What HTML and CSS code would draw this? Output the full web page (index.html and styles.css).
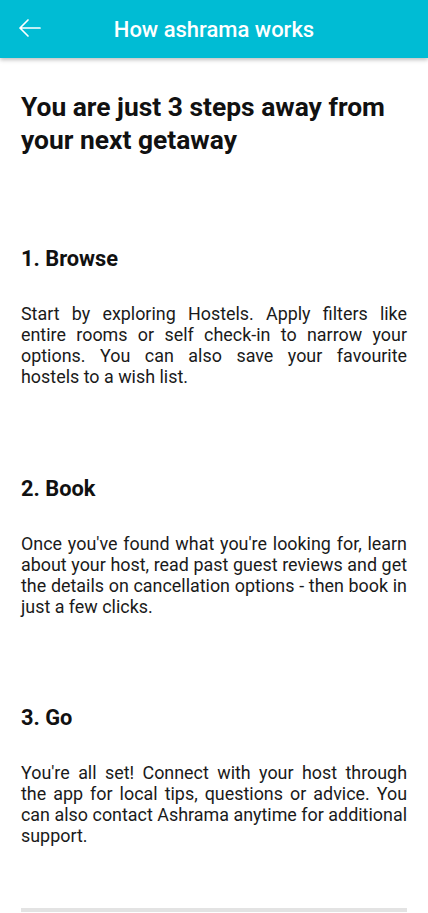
FILE: index.html
```html
<!DOCTYPE html>
<html>
<head>
<meta charset="utf-8">
<link rel="stylesheet" href="styles.css">
</head>
<body>
<header class="appbar">
  <button class="back" aria-label="Back">
    <svg width="24" height="24" viewBox="0 0 24 24"><path d="M23 12H3M11 4l-8 8 8 8" fill="none" stroke="#fff" stroke-width="1.7" stroke-linecap="round" stroke-linejoin="round"/></svg>
  </button>
  <h2 class="title">How ashrama works</h2>
</header>
<main class="content">
  <h1 class="headline">You are just 3 steps away from your next getaway</h1>
  <section class="step step-first">
    <h3 class="step-title">1. Browse</h3>
    <p class="step-text">Start by exploring Hostels. Apply filters like entire rooms or self check-in to narrow your options. You can also save your favourite hostels to a wish list.</p>
  </section>
  <section class="step">
    <h3 class="step-title">2. Book</h3>
    <p class="step-text">Once you've found what you're looking for, learn about your host, read past guest reviews and get the details on cancellation options - then book in just a few clicks.</p>
  </section>
  <section class="step">
    <h3 class="step-title">3. Go</h3>
    <p class="step-text">You're all set! Connect with your host through the app for local tips, questions or advice. You can also contact Ashrama anytime for additional support.</p>
  </section>
  <hr class="divider">
</main>
</body>
</html>
```
FILE: styles.css
```css
* { box-sizing: border-box; }
html, body { margin: 0; padding: 0; background: #fff; }
body {
  font-family: Roboto, "Liberation Sans", sans-serif;
  color: #111;
  width: 428px;
  height: 913px;
  overflow: hidden;
}
.appbar {
  height: 58px;
  background: #00bcd4;
  display: flex;
  align-items: center;
  position: relative;
  box-shadow: 0 2px 4px rgba(0,0,0,0.25);
  z-index: 2;
}
.back {
  position: absolute;
  left: 17px;
  top: 16px;
  width: 24px;
  height: 24px;
  padding: 0;
  border: 0;
  background: none;
  display: flex;
}
.title {
  flex: 1;
  margin: 0;
  text-align: center;
  color: #fff;
  font-size: 22px;
  font-weight: 500;
}
.content {
  padding: 33px 21px 0 21px;
  display: flex;
  flex-direction: column;
}
.headline {
  margin: 0;
  font-size: 26.4px;
  line-height: 33px;
  font-weight: 700;
  color: #111;
}
.step {
  margin-top: 89.5px;
  display: flex;
  flex-direction: column;
  gap: 32px;
}
.step-first {
  margin-top: 90px;
}
.step-title {
  margin: 0;
  font-size: 21.8px;
  line-height: 24px;
  font-weight: 700;
}
.step-text {
  margin: 0;
  font-size: 17.9px;
  line-height: 21px;
  text-align: justify;
  color: #1a1a1a;
}
.divider {
  margin: 62px 0 0 0;
  border: 0;
  height: 4px;
  background: #e3e3e3;
}
```
